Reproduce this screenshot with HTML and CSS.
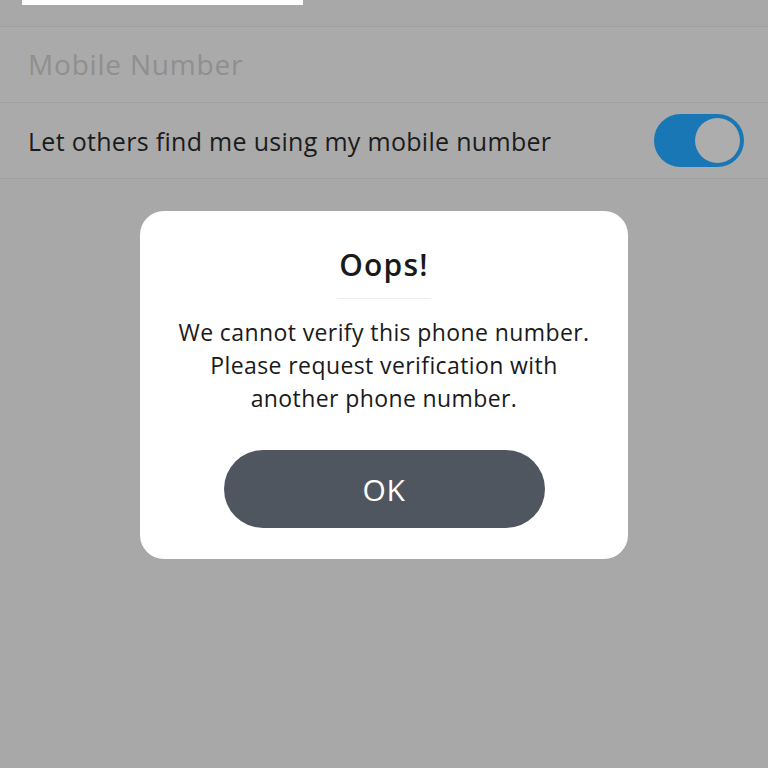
FILE: index.html
```html
<!DOCTYPE html>
<html lang="en">
<head>
    <meta charset="UTF-8">
    <meta name="viewport" content="width=device-width, initial-scale=1.0">
    <title>Mobile Number</title>
    <link rel="stylesheet" href="styles.css">
</head>
<body>
    <div class="screen">
        <!-- field above, scrolled mostly out of view -->
        <div class="top-field"></div>

        <div class="settings-list">
            <div class="row">
                <div class="placeholder">Mobile Number</div>
            </div>
            <div class="row">
                <div class="row-label">Let others find me using my mobile number</div>
                <div class="toggle on"><span class="knob"></span></div>
            </div>
        </div>
    </div>

    <!-- alert dialog -->
    <div class="overlay">
        <div class="dialog">
            <div class="dialog-title">Oops!</div>
            <div class="dialog-divider"></div>
            <div class="dialog-text">We cannot verify this phone number.<br>Please request verification with<br>another phone number.</div>
            <button class="btn-ok">OK</button>
        </div>
    </div>
</body>
</html>
```

FILE: styles.css
```css
/* page */
body {
    margin: 0;
    background: #a8a8a8;
    font-family: "Open Sans", "Noto Sans", sans-serif;
    height: 768px;
    overflow: hidden;
}

.screen {
    position: relative;
}

.top-field {
    margin-left: 22px;
    width: 281px;
    height: 5px;
    background: #fdfdfd;
}

/* settings rows */
.settings-list {
    margin-top: 21px;
    border-top: 1px solid #a0a0a0;
}

.row {
    display: flex;
    align-items: center;
    justify-content: space-between;
    height: 75px;
    padding: 0 24px 0 28px;
    background: #aaaaaa;
    border-bottom: 1px solid #a0a0a0;
}

.placeholder {
    font-size: 28px;
    letter-spacing: 0.8px;
    color: #8f8f8f;
    margin-top: -2px;
}

.row-label {
    font-size: 25px;
    letter-spacing: 0.3px;
    color: #1b1b1b;
}

/* switch */
.toggle {
    width: 90px;
    height: 53px;
    border-radius: 27px;
    background: #1877b4;
    display: flex;
    align-items: center;
    justify-content: flex-end;
    padding: 0 4px;
    box-sizing: border-box;
}

.knob {
    width: 45px;
    height: 45px;
    border-radius: 50%;
    background: #adadad;
}

/* dialog */
.overlay {
    position: fixed;
    top: 0;
    left: 0;
    right: 0;
    bottom: 0;
    display: flex;
    justify-content: center;
    align-items: flex-start;
    padding-top: 211px;
}

.dialog {
    width: 488px;
    height: 348px;
    box-sizing: border-box;
    background: #fff;
    border-radius: 24px;
    display: flex;
    flex-direction: column;
    align-items: center;
    padding-top: 34px;
}

.dialog-title {
    font-size: 30px;
    font-weight: 600;
    letter-spacing: 1.2px;
    color: #1a1a1a;
    line-height: 40px;
}

.dialog-divider {
    width: 94px;
    height: 1px;
    background: #efefef;
    margin: 13px 0 17px;
}

.dialog-text {
    font-size: 23px;
    letter-spacing: 0.4px;
    line-height: 33px;
    color: #1a1a1a;
    text-align: center;
}

.btn-ok {
    margin-top: 35px;
    width: 321px;
    height: 78px;
    border: none;
    border-radius: 39px;
    background: #4f5660;
    color: #fff;
    font-family: "Open Sans", "Noto Sans", sans-serif;
    font-size: 30px;
    letter-spacing: 0.6px;
}
```
